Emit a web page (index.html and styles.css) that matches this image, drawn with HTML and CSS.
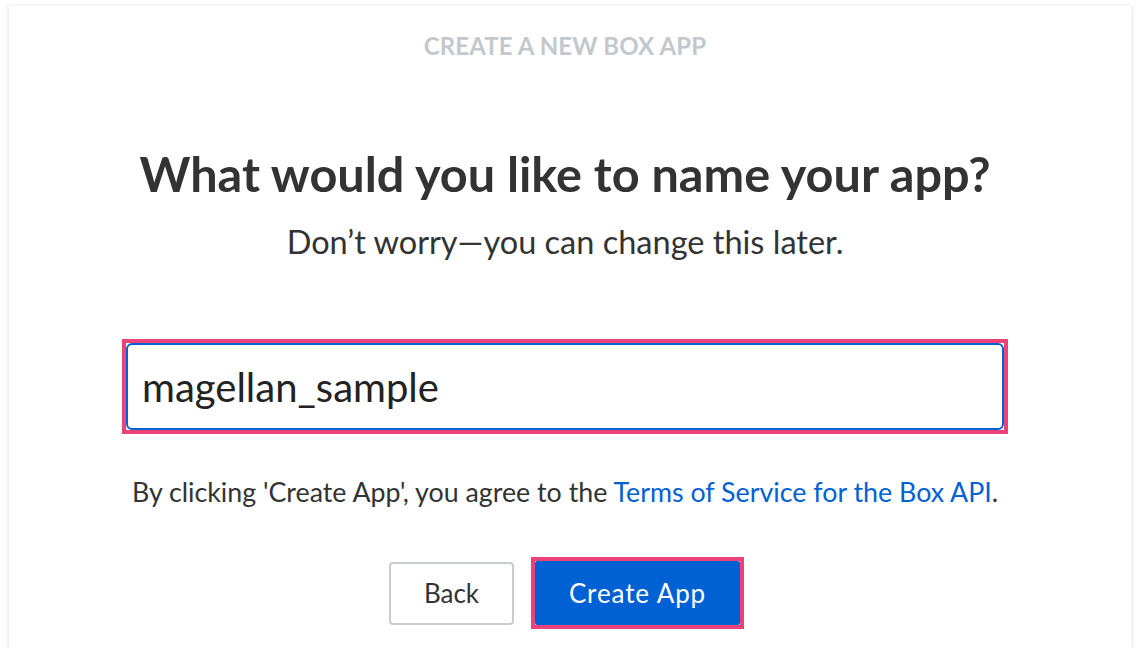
FILE: index.html
```html
<!DOCTYPE html>
<html>
<head>
<meta charset="utf-8">
<link rel="stylesheet" href="styles.css">
</head>
<body>
<div class="card">
  <div class="eyebrow">CREATE A NEW BOX APP</div>
  <h1 class="title">What would you like to name your app?</h1>
  <p class="subtitle">Don’t worry—you can change this later.</p>
  <div class="field-highlight">
    <input class="field" type="text" value="magellan_sample">
  </div>
  <p class="terms">By clicking 'Create App', you agree to the <a class="link" href="#">Terms of Service for the Box API</a>.</p>
  <div class="actions">
    <button class="btn btn-secondary">Back</button>
    <div class="btn-highlight"><button class="btn btn-primary">Create App</button></div>
  </div>
</div>
</body>
</html>
```
FILE: styles.css
```css
html, body {
  margin: 0;
  padding: 0;
  background: #ffffff;
}
body {
  font-family: Lato, "Open Sans", sans-serif;
  padding: 6px 9px 0 9px;
}
.card {
  width: 1122px;
  height: 642px;
  box-sizing: border-box;
  background: #ffffff;
  box-shadow: 0 1px 6px rgba(0, 0, 0, 0.14);
  display: flex;
  flex-direction: column;
  align-items: center;
  padding-top: 27px;
  padding-right: 10px;
}
.eyebrow {
  font-size: 24px;
  font-weight: 700;
  color: #c3c8cd;
  line-height: 26px;
  letter-spacing: 0.1px;
}
.title {
  margin: 86px 0 0 0;
  font-size: 48.6px;
  font-weight: 700;
  color: #333333;
  line-height: 56px;
}
.subtitle {
  margin: 21px 0 0 0;
  font-size: 32.5px;
  color: #333333;
  line-height: 40px;
}
.field-highlight {
  margin-top: 77px;
  width: 886px;
  height: 95px;
  box-sizing: border-box;
  border: 4px solid #e9437a;
  display: flex;
}
.field {
  flex: 1;
  margin: 0;
  border: 2px solid #0061d5;
  border-radius: 6px;
  padding: 0 14px;
  font-family: Lato, sans-serif;
  font-size: 40px;
  color: #222222;
  outline: none;
  background: #fff;
}
.terms {
  margin: 42px 0 0 0;
  font-size: 26.8px;
  color: #333333;
  line-height: 32px;
}
.link {
  color: #0061d5;
  text-decoration: none;
}
.actions {
  margin-top: 49px;
  display: flex;
  align-items: center;
  gap: 17px;
  margin-left: 3px;
}
.btn {
  font-family: Lato, sans-serif;
  font-size: 26px;
  border-radius: 4px;
  cursor: pointer;
  margin: 0;
}
.btn-secondary {
  width: 125px;
  height: 63px;
  background: #ffffff;
  border: 2px solid #c8ccd0;
  color: #333333;
}
.btn-highlight {
  border: 4px solid #e9437a;
  display: flex;
}
.btn-primary {
  width: 205px;
  height: 64px;
  background: #0061d5;
  border: none;
  border-radius: 2px;
  color: #ffffff;
  letter-spacing: 0.9px;
}
```
